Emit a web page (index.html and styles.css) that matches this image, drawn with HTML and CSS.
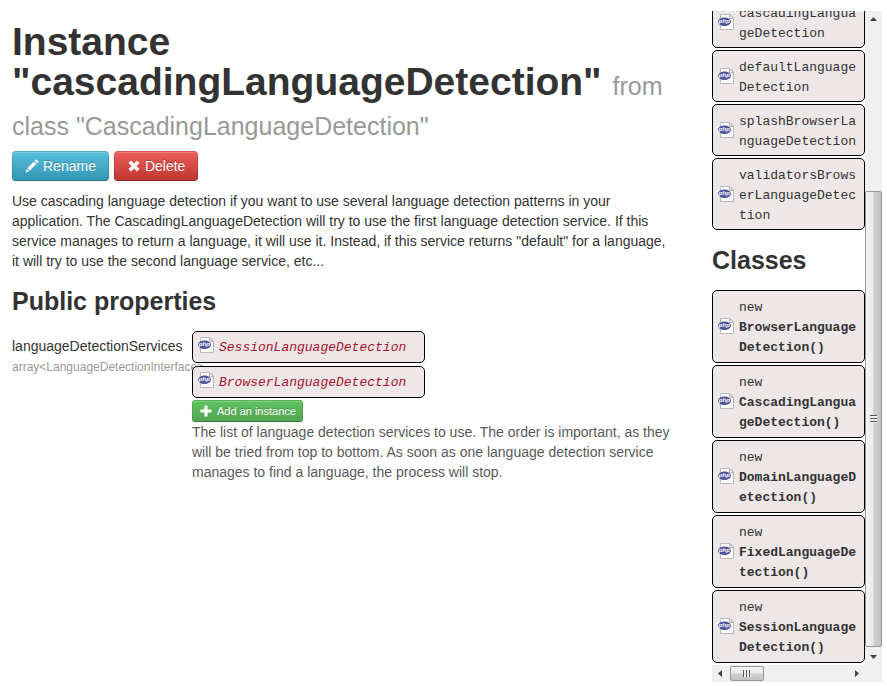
FILE: index.html
```html
<!DOCTYPE html>
<html lang="en">
<head>
<meta charset="utf-8">
<title>Instance "cascadingLanguageDetection"</title>
<link rel="stylesheet" href="styles.css">
</head>
<body>
<svg class="sprite" aria-hidden="true">
  <symbol id="php" viewBox="0 0 16 16">
    <path d="M2.500 .5H12L15.500 4v11.500h-13z" fill="#fcfcfc" stroke="#b9b9b9"/>
    <path d="M11.500 .5V4.500h4z" fill="#e4e4e4" stroke="#b9b9b9"/>
    <ellipse cx="6.500" cy="7.700" rx="6.500" ry="4.200" fill="#4f5399"/>
    <text x="6.300" y="9.300" text-anchor="middle" class="php-text">php</text>
  </symbol>
</svg>
<div class="page">
  <main>
    <h1>Instance "cascadingLanguageDetection" <small>from class "CascadingLanguageDetection"</small></h1>
    <div class="actions">
      <button class="btn info" type="button"><svg width="14" height="14" viewBox="0 0 14 14"><path d="M.5 13.500l1.200-3.700 2.500 2.500zM2.400 9.100L8.800 2.700l2.500 2.500-6.400 6.400zM9.600 1.900l1.100-1.100q.6-.5 1.200 0l1.300 1.300q.5.600 0 1.200l-1.100 1.100z" fill="#fff"/></svg>Rename</button>
      <button class="btn danger" type="button"><svg width="14" height="14" viewBox="0 0 14 14"><path d="M4 1.500L7 4.500l3-3 2.500 2.500-3 3 3 3-2.500 2.500-3-3-3 3L1.500 10l3-3-3-3z" fill="#fff"/></svg>Delete</button>
    </div>
    <p>Use cascading language detection if you want to use several language detection patterns in your application. The CascadingLanguageDetection will try to use the first language detection service. If this service manages to return a language, it will use it. Instead, if this service returns "default" for a language, it will try to use the second language service, etc...</p>
    <h2>Public properties</h2>
    <div class="property">
      <div class="name">languageDetectionServices<br><small>array&lt;LanguageDetectionInterface&gt;</small></div>
      <div class="value">
        <ul class="chosen">
          <li class="card"><svg class="icon"><use href="#php"/></svg><em>SessionLanguageDetection</em></li>
          <li class="card"><svg class="icon"><use href="#php"/></svg><em>BrowserLanguageDetection</em></li>
        </ul>
        <button class="btn success mini" type="button"><svg width="14" height="14" viewBox="0 0 14 14"><path d="M5.500 1.500h3v4h4v3h-4v4h-3v-4h-4v-3h4z" fill="#fff"/></svg>Add an instance</button>
        <div class="help">The list of language detection services to use. The order is important, as they will be tried from top to bottom. As soon as one language detection service manages to find a language, the process will stop.</div>
      </div>
    </div>
  </main>
  <aside>
    <div class="list">
      <ul>
        <li class="card"><svg class="icon"><use href="#php"/></svg><span>cascadingLanguageDetection</span></li>
        <li class="card"><svg class="icon"><use href="#php"/></svg><span>defaultLanguageDetection</span></li>
        <li class="card"><svg class="icon"><use href="#php"/></svg><span>splashBrowserLanguageDetection</span></li>
        <li class="card"><svg class="icon"><use href="#php"/></svg><span>validatorsBrowserLanguageDetection</span></li>
      </ul>
      <h2>Classes</h2>
      <ul class="classes">
        <li class="card"><svg class="icon"><use href="#php"/></svg><span>new <b>BrowserLanguageDetection()</b></span></li>
        <li class="card"><svg class="icon"><use href="#php"/></svg><span>new <b>CascadingLanguageDetection()</b></span></li>
        <li class="card"><svg class="icon"><use href="#php"/></svg><span>new <b>DomainLanguageDetection()</b></span></li>
        <li class="card"><svg class="icon"><use href="#php"/></svg><span>new <b>FixedLanguageDetection()</b></span></li>
        <li class="card"><svg class="icon"><use href="#php"/></svg><span>new <b>SessionLanguageDetection()</b></span></li>
      </ul>
    </div>
    <div class="bar vertical" aria-hidden="true">
      <svg class="arrow" viewBox="0 0 17 17"><path d="M5 10l3.500-4 3.500 4z"/></svg>
      <div class="before"></div>
      <div class="thumb"><i></i></div>
      <div class="after"></div>
      <svg class="arrow" viewBox="0 0 17 17"><path d="M5 7l3.500 4L12 7z"/></svg>
    </div>
    <div class="bar horizontal" aria-hidden="true">
      <svg class="arrow" viewBox="0 0 17 17"><path d="M10 5L6 8.500l4 3.500z"/></svg>
      <div class="thumb"><i></i></div>
      <div class="after"></div>
      <svg class="arrow" viewBox="0 0 17 17"><path d="M7 5l4 3.500L7 12z"/></svg>
    </div>
    <div class="bar"></div>
  </aside>
</div>
</body>
</html>
```
FILE: styles.css
```css
* { box-sizing: border-box; }
body {
  margin: 0;
  font: 14px/20px "Liberation Sans", Arial, sans-serif;
  color: #333;
  background: #fff;
}
.sprite { display: none; }
.php-text { font: italic bold 6px "Liberation Sans", Arial, sans-serif; fill: #fff; }
.page {
  display: grid;
  grid-template-columns: minmax(0, 1fr) 170px;
  grid-template-rows: minmax(0, 1fr);
  gap: 37px;
  height: 100vh;
  padding: 11px 5px 4px 12px;
}
main { min-width: 0; }
h1 { margin: 11px 0 9px; font-size: 39px; line-height: 40px; }
h1 small { font-size: 25px; line-height: 1; font-weight: normal; color: #999; }
h2 { margin: 10px 0; font-size: 25px; line-height: 40px; }
p { margin: 10px 0; }
ul { list-style: none; margin: 0; padding: 0; display: grid; gap: 2px; }
.actions { display: flex; gap: 5px; }
.btn {
  display: inline-flex;
  align-items: center;
  gap: 4px;
  height: 30px;
  padding: 0 12px;
  border: 1px solid;
  border-color: rgba(0,0,0,.1) rgba(0,0,0,.1) rgba(0,0,0,.25);
  border-radius: 4px;
  font: 14px/20px "Liberation Sans", Arial, sans-serif;
  color: #fff;
  text-shadow: 0 -1px 0 rgba(0,0,0,.25);
  box-shadow: inset 0 1px 0 rgba(255,255,255,.2), 0 1px 2px rgba(0,0,0,.05);
}
.info { background: linear-gradient(#5bc0de, #2f96b4) border-box; }
.danger { background: linear-gradient(#ee5f5b, #bd362f) border-box; }
.success { background: linear-gradient(#62c462, #51a351) border-box; }
.mini { height: 22px; padding: 0 6px; margin-top: 2px; border-radius: 3px; font-size: 11px; display: flex; }
.property { display: grid; grid-template-columns: 180px minmax(0, 1fr); }
.name { padding-top: 5px; white-space: nowrap; }
.name small { font-size: 12px; color: #999; }
.value { position: relative; }
.card {
  display: flex;
  align-items: center;
  gap: 5px;
  padding: 3px 4px 3px 5px;
  border: 1px solid #000;
  border-radius: 5px;
  background: #ede7e7;
  font: 13px/20px "Courier New", "Liberation Mono", monospace;
}
.card span { min-width: 0; padding-top: 4px; overflow-wrap: anywhere; }
.chosen { justify-items: start; gap: 3px; }
.chosen .card { align-items: flex-start; padding: 5px 18px 5px 5px; }
.chosen em { color: #a8132f; padding-top: 2px; line-height: 18px; }
.icon { flex: none; width: 16px; height: 16px; }
.help { color: #595959; }
aside {
  display: grid;
  grid-template-columns: minmax(0, 1fr) 17px;
  grid-template-rows: minmax(0, 1fr) 17px;
}
.list {
  display: flex;
  flex-direction: column;
  justify-content: flex-end;
  min-height: 0;
  overflow: hidden;
  padding-bottom: 2px;
}
.list > * { flex: none; }
.classes .card { padding-bottom: 4px; }
.bar { display: flex; background: #f0f0f0; }
.vertical { flex-direction: column; }
.arrow { flex: none; width: 17px; height: 17px; fill: #404040; }
.thumb { display: flex; align-items: center; justify-content: center; border: 1px solid #979797; border-radius: 2px; }
.vertical .before { flex: 164; }
.vertical .thumb { flex: 455; background: linear-gradient(90deg, #f5f5f5, #e9e9eb 45%, #d0d0d4 55%, #c2c2c6); }
.vertical .after { flex: 1; }
.vertical i { width: 7px; height: 8px; background: repeating-linear-gradient(#555 0 1px, #eee 1px 3px); }
.horizontal .thumb { width: 34px; margin: 1px; background: linear-gradient(#f5f5f5, #e9e9eb 45%, #d0d0d4 55%, #c2c2c6); }
.horizontal .after { flex: 1; }
.horizontal i { width: 8px; height: 7px; background: repeating-linear-gradient(90deg, #555 0 1px, #eee 1px 3px); }
```
